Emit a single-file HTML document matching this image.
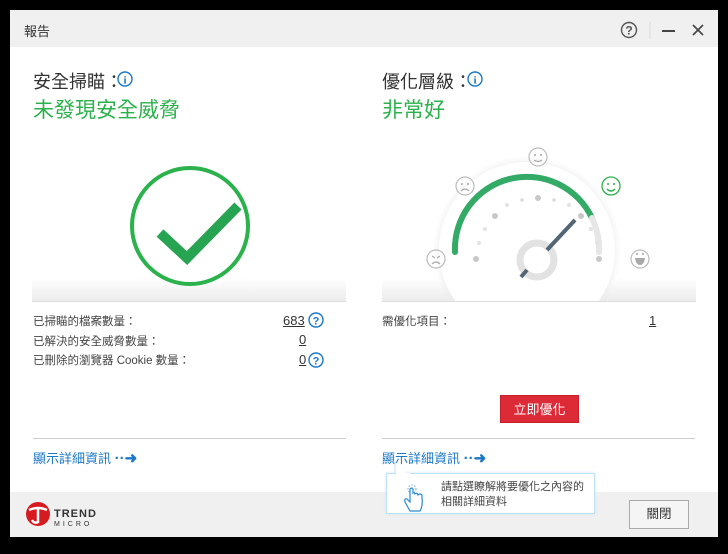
<!DOCTYPE html>
<html><head><meta charset="utf-8"><style>
*{margin:0;padding:0;box-sizing:border-box}
body{width:728px;height:554px;background:#000;position:relative;overflow:hidden;font-family:"Liberation Sans","Noto Sans CJK TC",sans-serif;color:#333}
.win{position:absolute;left:10px;top:10px;width:708px;height:527px;background:#fff}
.title{position:absolute;left:0;top:0;width:708px;height:37px;background:#f0f0f0}
.abs{position:absolute}
.h{font-size:18px;color:#333}
.g{font-size:21px;color:#2bb24c}
.s{font-size:11.5px;color:#444}
.u{text-decoration:underline;font-size:13px;color:#333}
.link{font-size:13px;color:#1a78c8}
.foot{position:absolute;left:0;top:482px;width:708px;height:45px;background:#f0f0f0}
.floor{position:absolute;height:24px;background:linear-gradient(#fff,#ececec);border-bottom:1px solid #ddd}
</style></head><body>
<div class="win">
<div class="title"><span class="abs" style="left:14px;top:11px;font-size:13px;color:#333">報告</span>
<svg class="abs" style="left:608px;top:10px" width="90" height="20"><circle cx="11" cy="10" r="7.5" fill="none" stroke="#555" stroke-width="1.4"/><text x="11" y="14.5" font-size="12" font-weight="bold" text-anchor="middle" fill="#555" font-family="Liberation Sans">?</text><line x1="32" y1="2" x2="32" y2="19" stroke="#ddd"/><line x1="44" y1="11" x2="57" y2="11" stroke="#444" stroke-width="2"/><path d="M75 5 L85 15 M85 5 L75 15" stroke="#444" stroke-width="1.6"/></svg></div>

<div class="abs h" style="left:23px;top:58px">安全掃瞄：</div>
<svg class="abs" style="left:107px;top:61px" width="18" height="18"><circle cx="8" cy="8" r="7" fill="none" stroke="#1a78c8" stroke-width="1.4"/><text x="8" y="12.5" font-size="11" font-weight="bold" text-anchor="middle" fill="#1a78c8" font-family="Liberation Serif">i</text></svg>
<div class="abs g" style="left:23px;top:84px">未發現安全威脅</div>

<div class="abs h" style="left:372px;top:58px">優化層級：</div>
<svg class="abs" style="left:457px;top:61px" width="18" height="18"><circle cx="8" cy="8" r="7" fill="none" stroke="#1a78c8" stroke-width="1.4"/><text x="8" y="12.5" font-size="11" font-weight="bold" text-anchor="middle" fill="#1a78c8" font-family="Liberation Serif">i</text></svg>
<div class="abs g" style="left:372px;top:84px">非常好</div>

<div class="floor" style="left:22px;top:268px;width:314px"></div>
<div class="floor" style="left:372px;top:268px;width:314px"></div>

<svg class="abs" style="left:110px;top:153px" width="140" height="130"><circle cx="70" cy="63" r="58" fill="#fff" stroke="#2bb24c" stroke-width="4"/><path d="M40 70 L67 95 L118 43" fill="none" stroke="#27a451" stroke-width="10"/></svg>

<svg class="abs" style="left:389px;top:110px" width="260" height="182">
<defs><radialGradient id="sh" cx="0.5" cy="0.5" r="0.5"><stop offset="0.85" stop-color="#e8e8e8"/><stop offset="1" stop-color="#e8e8e8" stop-opacity="0"/></radialGradient></defs>
<circle cx="128" cy="130" r="94" fill="url(#sh)"/>
<circle cx="128" cy="130" r="88" fill="#fff"/>
<rect x="0" y="181" width="260" height="1" fill="#ddd"/>
<path d="M56 132 A72 72 0 0 1 193 98" fill="none" stroke="#33ab67" stroke-width="6" stroke-linecap="round"/>
<path d="M193 98 A72 72 0 0 1 200 132" fill="none" stroke="#e6e6e6" stroke-width="6" stroke-linecap="round"/>
<g fill="#c8c8c8"><circle cx="77" cy="139" r="3"/><circle cx="96" cy="96" r="3"/><circle cx="139" cy="78" r="3"/><circle cx="182" cy="96" r="3"/><circle cx="200" cy="139" r="3"/></g>
<g fill="#e2e2e2"><circle cx="80" cy="123" r="2"/><circle cx="86" cy="109" r="2"/><circle cx="108" cy="85" r="2"/><circle cx="123" cy="80" r="2"/><circle cx="155" cy="80" r="2"/><circle cx="170" cy="85" r="2"/><circle cx="192" cy="109" r="2"/><circle cx="198" cy="123" r="2"/></g>
<circle cx="138" cy="140" r="17" fill="none" stroke="#e2e2e2" stroke-width="7"/>
<path d="M148 130 L176 100 M128 150 L122 157" stroke="#536675" stroke-width="4"/>
<g fill="none" stroke="#bbb" stroke-width="1.2"><circle cx="139" cy="37" r="9"/><circle cx="66" cy="66" r="9"/><circle cx="37" cy="139" r="9"/><circle cx="241" cy="139" r="9"/></g>
<circle cx="212" cy="66" r="9" fill="none" stroke="#2bb24c" stroke-width="1.3"/>
<path d="M208 69 Q212 73 216 69" stroke="#2bb24c" stroke-width="1.5" fill="none"/><circle cx="209" cy="64" r="1" fill="#2bb24c"/><circle cx="215" cy="64" r="1" fill="#2bb24c"/>
<g fill="#aaa"><circle cx="136" cy="35" r="1"/><circle cx="142" cy="35" r="1"/><circle cx="63" cy="64" r="1"/><circle cx="69" cy="64" r="1"/></g>
<path d="M135 40 Q139 43 143 40 M62 71 Q66 67 70 71 M33 144 Q37 140 41 144 M33 136 L36 138 M41 136 L38 138" stroke="#aaa" fill="none" stroke-width="1.2"/>
<path d="M236 138 L246 138 Q245 145 241 145 Q237 145 236 138Z" fill="#aaa"/><circle cx="238" cy="134" r="1" fill="#aaa"/><circle cx="244" cy="134" r="1" fill="#aaa"/>
</svg>

<div class="abs s" style="left:23px;top:303px">已掃瞄的檔案數量：</div>
<div class="abs s" style="left:23px;top:323px">已解決的安全威脅數量：</div>
<div class="abs s" style="left:23px;top:342px">已刪除的瀏覽器 Cookie 數量：</div>
<div class="abs u" style="left:273px;top:303px">683</div>
<div class="abs u" style="left:289px;top:322px">0</div>
<div class="abs u" style="left:289px;top:342px">0</div>
<svg class="abs" style="left:298px;top:302px" width="18" height="18"><circle cx="8" cy="8" r="7" fill="none" stroke="#1a78c8" stroke-width="1.4"/><text x="8" y="12.5" font-size="11" font-weight="bold" text-anchor="middle" fill="#1a78c8">?</text></svg>
<svg class="abs" style="left:298px;top:342px" width="18" height="18"><circle cx="8" cy="8" r="7" fill="none" stroke="#1a78c8" stroke-width="1.4"/><text x="8" y="12.5" font-size="11" font-weight="bold" text-anchor="middle" fill="#1a78c8">?</text></svg>

<div class="abs s" style="left:372px;top:303px">需優化項目：</div>
<div class="abs u" style="left:639px;top:303px">1</div>

<div class="abs" style="left:490px;top:385px;width:79px;height:28px;background:#dc2a37;color:#fff;font-size:13px;text-align:center;line-height:28px;border:1px solid #c51f2b">立即優化</div>

<div class="abs" style="left:23px;top:428px;width:313px;height:1px;background:#ccc"></div>
<div class="abs" style="left:372px;top:428px;width:313px;height:1px;background:#ccc"></div>
<div class="abs link" style="left:23px;top:438px">顯示詳細資訊 <b style="font-size:15px">··➜</b></div>
<div class="abs link" style="left:372px;top:438px">顯示詳細資訊 <b style="font-size:15px">··➜</b></div>

<div class="foot"></div>
<svg class="abs" style="left:15px;top:490px" width="80" height="32"><circle cx="13" cy="14" r="12" fill="#d71920"/><path d="M4 10 Q13 6 22 10 M13 9 L13 22 Q9 24 7 20" stroke="#fff" stroke-width="2.5" fill="none"/><text x="29" y="17" font-size="11" font-weight="bold" fill="#333" font-family="Liberation Sans" letter-spacing="1">TREND</text><text x="29" y="26" font-size="7" fill="#333" font-family="Liberation Sans" letter-spacing="3">MICRO</text></svg>
<div class="abs" style="left:619px;top:490px;width:60px;height:29px;background:#f5f5f5;border:1px solid #aaa;font-size:12.5px;text-align:center;line-height:27px;color:#333">關閉</div>

<div class="abs" style="left:376px;top:463px;width:209px;height:41px;background:#fff;border:1px solid #bfe0f5;box-shadow:0 0 3px #cde8f8"></div>
<svg class="abs" style="left:383px;top:452px" width="20" height="14"><path d="M2 0 L2 12 L14 12" fill="#fff" stroke="#bfe0f5"/><rect x="3" y="11" width="14" height="3" fill="#fff"/></svg>
<svg class="abs" style="left:392px;top:474px" width="26" height="30"><circle cx="10" cy="5" r="4" fill="none" stroke="#6aaee0" stroke-dasharray="1.5 1.5"/><path d="M8 5 L8 18 L5 15 Q2 14 3 18 L8 27 L18 27 Q21 22 20 14 L20 11 Q18 9 16 11 Q15 8 13 10 Q12 8 11 9 L11 5 Q10 3 8 5Z" fill="#fff" stroke="#2a8ad6" stroke-width="1.2"/></svg>
<div class="abs" style="left:431px;top:470px;font-size:11px;color:#444;line-height:15px">請點選瞭解將要優化之內容的<br>相關詳細資料</div>
</div>
</body></html>
